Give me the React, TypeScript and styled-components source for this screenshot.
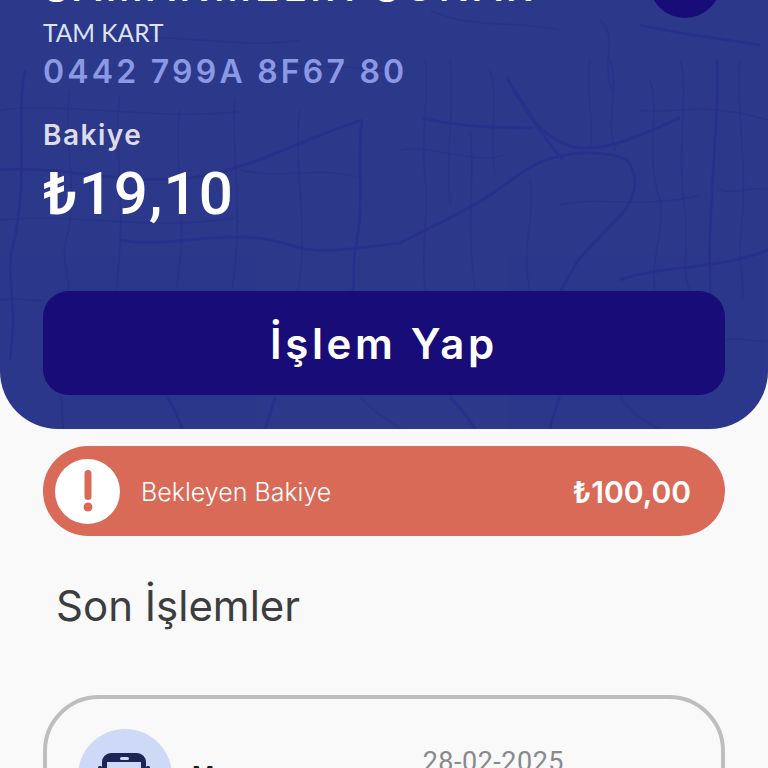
import React from 'react';
import styled, { createGlobalStyle } from 'styled-components';

const GlobalStyle = createGlobalStyle`
  html, body {
    margin: 0;
    padding: 0;
    background: #f9f9f9;
    overflow: hidden;
  }
  #root {
    height: 768px;
    overflow: hidden;
  }
`;

const Screen = styled.div`
  width: 768px;
  height: 768px;
  overflow: hidden;
  background: #f9f9f9;
  font-family: "Inter", "Liberation Sans", sans-serif;
`;

const Card = styled.section`
  position: relative;
  height: 429px;
  box-sizing: border-box;
  padding: 0 43px;
  background: #2c388a;
  border-radius: 0 0 58px 58px;
  overflow: hidden;
  display: flex;
  flex-direction: column;
`;

const MapLines = styled.svg`
  position: absolute;
  inset: 0;
  width: 100%;
  height: 100%;
`;

const CardBody = styled.div`
  position: relative;
  display: flex;
  flex-direction: column;
`;

const HolderRow = styled.div`
  height: 18px;
  display: flex;
  justify-content: space-between;
  align-items: flex-end;
`;

const HolderName = styled.div`
  color: #fff;
  font-weight: 500;
  font-size: 41px;
  line-height: 38px;
  letter-spacing: 3.6px;
  white-space: nowrap;
  margin-bottom: 13px;
`;

const Avatar = styled.div`
  width: 72px;
  height: 72px;
  border-radius: 50%;
  background: #180c78;
  flex: none;
  margin-right: 4px;
`;

const CardType = styled.div`
  margin-top: 1px;
  color: #dfe2f2;
  font-family: "Lato", sans-serif;
  font-size: 24.5px;
  line-height: 28px;
`;

const CardNumber = styled.div`
  margin-top: 5px;
  color: #8b98e4;
  font-weight: 600;
  font-size: 32px;
  line-height: 40px;
  letter-spacing: 3.2px;
  white-space: nowrap;
`;

const BalanceLabel = styled.div`
  margin-top: 26px;
  color: #dcdde6;
  font-weight: 600;
  font-size: 28px;
  line-height: 34px;
  letter-spacing: 1.5px;
`;

const BalanceValue = styled.div`
  margin-top: 10px;
  color: #fff;
  font-family: "Roboto", sans-serif;
  font-weight: 500;
  font-size: 60px;
  line-height: 64px;
  letter-spacing: 1.1px;
`;

const ActionButton = styled.button`
  margin-top: 65px;
  width: 100%;
  height: 104px;
  border: 0;
  border-radius: 26px;
  background: #180c78;
  color: #fff;
  font-family: "Inter", sans-serif;
  font-weight: 600;
  font-size: 42px;
  letter-spacing: 3.6px;
`;

const PendingBar = styled.div`
  margin: 17px 43px 0;
  height: 90px;
  box-sizing: border-box;
  padding: 0 34px 0 12px;
  border-radius: 45px;
  background: #d96a58;
  color: #fff;
  display: flex;
  align-items: center;
`;

const AlertBadge = styled.div`
  width: 65px;
  height: 65px;
  border-radius: 50%;
  background: #fff;
  display: flex;
  align-items: center;
  justify-content: center;
  flex: none;
`;

const PendingLabel = styled.span`
  margin: 2px 0 0 21px;
  font-weight: 300;
  font-size: 25px;
  flex: 1;
`;

const PendingAmount = styled.span`
  margin-top: 2px;
  font-weight: 600;
  font-size: 30px;
`;

const SectionTitle = styled.h2`
  margin: 40px 0 0 56px;
  color: #3d3d3d;
  font-weight: 400;
  font-size: 42px;
  line-height: 60px;
`;

const TransactionCard = styled.article`
  margin: 59px 43px 0;
  height: 200px;
  box-sizing: border-box;
  padding: 30px 31px;
  border: 4px solid #bebebe;
  border-radius: 56px;
  display: flex;
  align-items: flex-start;
`;

const TransportIcon = styled.div`
  width: 94px;
  height: 94px;
  border-radius: 50%;
  background: #cdd9f6;
  display: flex;
  justify-content: center;
  padding-top: 24px;
  box-sizing: border-box;
  flex: none;
`;

const TransactionTitle = styled.div`
  margin: 32px 0 0 20px;
  color: #1b1b1b;
  font-weight: 600;
  font-size: 24px;
  flex: 1;
`;

const TransactionDate = styled.div`
  margin: 17px 126px 0 0;
  color: #8a8a8e;
  font-family: "Roboto", sans-serif;
  font-size: 27px;
  letter-spacing: 0.5px;
`;

// the faint street map behind the card
const mainRoads = [
  'M400 243 C440 222 480 205 507 183 C525 170 540 160 553 158 C580 150 610 152 627 160 C638 175 638 190 625 210 C608 230 590 245 577 262 L560 292',
  'M507 77 C515 95 525 108 533 120 C545 135 560 143 573 147 C610 152 640 135 680 118',
  'M717 60 C719 110 712 170 710 235 C708 270 714 290 706 320',
  'M423 118 C450 125 490 128 533 128 M640 25 C660 30 690 35 760 45',
  'M362 120 C356 160 366 200 355 250 C352 270 356 285 352 292',
  'M515 90 C530 115 545 140 563 160',
  'M0 170 C60 165 120 185 190 178 C250 170 300 140 362 120',
  'M25 70 C15 120 30 180 12 250 C6 280 18 300 10 360',
  'M120 240 C170 250 230 225 290 245 C320 255 340 250 400 243',
  'M167 397 C175 410 180 420 182 429 M275 397 C272 410 268 420 265 429',
  'M450 397 C462 410 470 420 475 429 M560 397 C555 410 552 420 550 429',
  'M620 280 C660 265 720 270 768 250',
];

const sideStreets = [
  'M425 60 C430 90 420 130 425 180 C430 210 420 240 425 290',
  'M450 60 C455 110 445 150 450 205 M470 130 C476 170 465 220 475 290',
  'M490 70 C500 100 488 130 495 175 M530 180 C536 215 520 250 530 290',
  'M590 60 C585 90 595 120 590 150 M610 60 C620 90 605 120 615 150',
  'M650 80 C660 110 645 160 660 200 C665 230 650 260 655 290',
  'M680 60 C690 90 675 150 685 210 C690 240 680 270 690 290',
  'M740 60 C735 110 750 170 740 240 C738 260 745 280 742 300',
  'M400 150 C440 145 470 165 505 155 M560 205 C600 195 640 210 700 195',
  'M640 110 C670 115 700 100 768 120 M720 190 C740 195 750 185 768 190',
  'M70 90 C62 140 80 190 66 240 C60 265 72 280 68 290',
  'M120 95 C112 140 128 200 116 290 M180 110 C172 160 190 220 176 290',
  'M235 100 C230 150 245 210 232 290 M300 110 C292 160 310 230 298 290',
  'M0 110 C70 102 150 120 240 112 M0 220 C70 212 150 232 235 218',
  'M240 170 C280 180 320 165 360 178 M260 60 C300 72 340 60 400 75',
  'M0 300 C30 296 40 304 43 300 M725 340 C745 336 755 344 768 340',
  'M60 395 C65 410 60 420 64 429 M360 397 C370 410 390 420 400 429 M620 397 C630 410 640 420 660 429',
  'M600 20 C620 40 600 60 612 90 M430 10 C470 30 520 20 560 30 M120 40 C180 32 240 50 300 40',
];

export default function App() {
  return (
    <Screen>
      <GlobalStyle />
      <Card>
        <MapLines viewBox="0 0 768 429" fill="none" stroke="#27308a">
          <g strokeWidth="2.6">
            {mainRoads.map((d) => (
              <path key={d} d={d} />
            ))}
          </g>
          <g strokeWidth="1.3" opacity="0.7">
            {sideStreets.map((d) => (
              <path key={d} d={d} />
            ))}
          </g>
        </MapLines>
        <CardBody>
          <HolderRow>
            <HolderName>SAMANMELİH SONAR</HolderName>
            <Avatar />
          </HolderRow>
          <CardType>TAM KART</CardType>
          <CardNumber>0442 799A 8F67 80</CardNumber>
          <BalanceLabel>Bakiye</BalanceLabel>
          <BalanceValue>₺19,10</BalanceValue>
          <ActionButton type="button">İşlem Yap</ActionButton>
        </CardBody>
      </Card>
      <PendingBar>
        <AlertBadge>
          <svg width="12" height="42" viewBox="0 0 12 42">
            <rect x="2.5" y="0" width="7" height="30" rx="3.5" fill="#d96a58" />
            <circle cx="6" cy="37" r="4.5" fill="#d96a58" />
          </svg>
        </AlertBadge>
        <PendingLabel>Bekleyen Bakiye</PendingLabel>
        <PendingAmount>₺100,00</PendingAmount>
      </PendingBar>
      <SectionTitle>Son İşlemler</SectionTitle>
      <TransactionCard>
        <TransportIcon>
          <svg width="56" height="60" viewBox="0 0 56 60">
            <rect x="5" y="0" width="44" height="50" rx="9" fill="#1c2554" />
            <rect x="10" y="9" width="34" height="28" fill="#cdd9f6" />
            <rect x="23" y="4" width="9" height="3" rx="1.5" fill="#cdd9f6" />
            <rect x="1" y="13" width="4" height="9" rx="1.5" fill="#1c2554" />
            <rect x="49" y="13" width="4" height="9" rx="1.5" fill="#1c2554" />
          </svg>
        </TransportIcon>
        <TransactionTitle>Metro</TransactionTitle>
        <TransactionDate>28-02-2025</TransactionDate>
      </TransactionCard>
    </Screen>
  );
}
